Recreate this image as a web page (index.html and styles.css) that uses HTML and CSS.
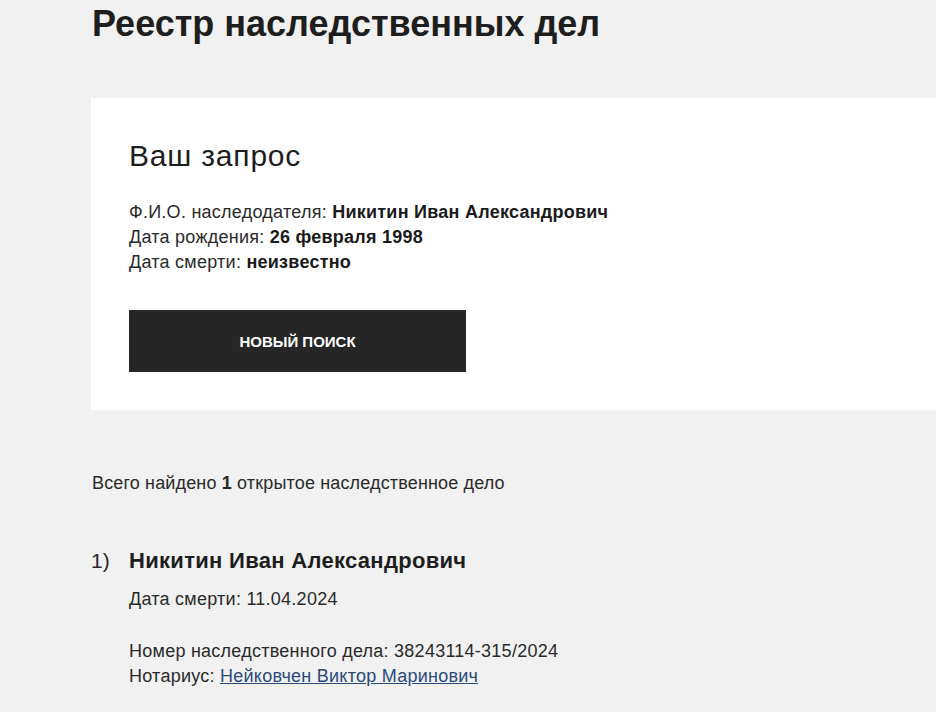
FILE: index.html
```html
<!DOCTYPE html>
<html lang="ru">
<head>
  <meta charset="UTF-8">
  <meta name="viewport" content="width=device-width, initial-scale=1.0">
  <title>Реестр наследственных дел</title>
  <link rel="stylesheet" href="styles.css">
</head>
<body>
  <div class="page">
    <h1>Реестр наследственных дел</h1>

    <div class="card">
      <h2>Ваш запрос</h2>
      <div class="query">
        <div>Ф.И.О. наследодателя: <b>Никитин Иван Александрович</b></div>
        <div>Дата рождения: <b>26 февраля 1998</b></div>
        <div>Дата смерти: <b>неизвестно</b></div>
      </div>
      <button type="button" class="btn">Новый поиск</button>
    </div>

    <p class="total">Всего найдено <b>1</b> открытое наследственное дело</p>

    <div class="case">
      <div class="case-num">1)</div>
      <div class="case-body">
        <div class="case-name">Никитин Иван Александрович</div>
        <div class="case-date">Дата смерти: 11.04.2024</div>
        <div class="case-info">
          <div>Номер наследственного дела: 38243114-315/2024</div>
          <div>Нотариус: <a href="#">Нейковчен Виктор Маринович</a></div>
        </div>
      </div>
    </div>
  </div>
</body>
</html>
```

FILE: styles.css
```css
body {
  margin: 0;
  background-color: #f1f1f1;
  font-family: "Liberation Sans", Arial, sans-serif;
  color: #2a2a2a;
}
.page {
  padding-left: 91px;
}
h1 {
  margin: 0;
  padding: 2px 0 0 1px;
  font-size: 36px;
  line-height: 44px;
  font-weight: bold;
  color: #1e1e1e;
}
.card {
  margin-top: 52px;
  background-color: #fff;
  padding: 38px;
}
h2 {
  margin: 0;
  font-size: 30px;
  line-height: 40px;
  font-weight: normal;
  letter-spacing: 0.8px;
  color: #1e1e1e;
}
.query {
  margin-top: 24px;
  font-size: 18px;
  line-height: 25px;
  letter-spacing: 0.25px;
}
.query b {
  color: #1a1a1a;
}
.btn {
  margin-top: 35px;
  width: 337px;
  height: 62px;
  background-color: #262626;
  color: #fff;
  border: none;
  font-family: inherit;
  font-size: 15px;
  font-weight: bold;
  text-transform: uppercase;
  cursor: pointer;
}
.total {
  margin: 61px 0 0 1px;
  font-size: 18px;
  line-height: 25px;
  letter-spacing: 0.15px;
}
.case {
  display: flex;
  margin-top: 50px;
}
.case-num {
  width: 38px;
  font-size: 21px;
  line-height: 30px;
}
.case-name {
  font-size: 22px;
  line-height: 30px;
  font-weight: bold;
  letter-spacing: 0.3px;
  color: #1e1e1e;
}
.case-date {
  margin-top: 11px;
  font-size: 18px;
  line-height: 25px;
  letter-spacing: 0.25px;
}
.case-info {
  margin-top: 27px;
  font-size: 18px;
  line-height: 25px;
  letter-spacing: 0.25px;
}
.case-info a {
  color: #2b4a7c;
  text-decoration: underline;
}
```
